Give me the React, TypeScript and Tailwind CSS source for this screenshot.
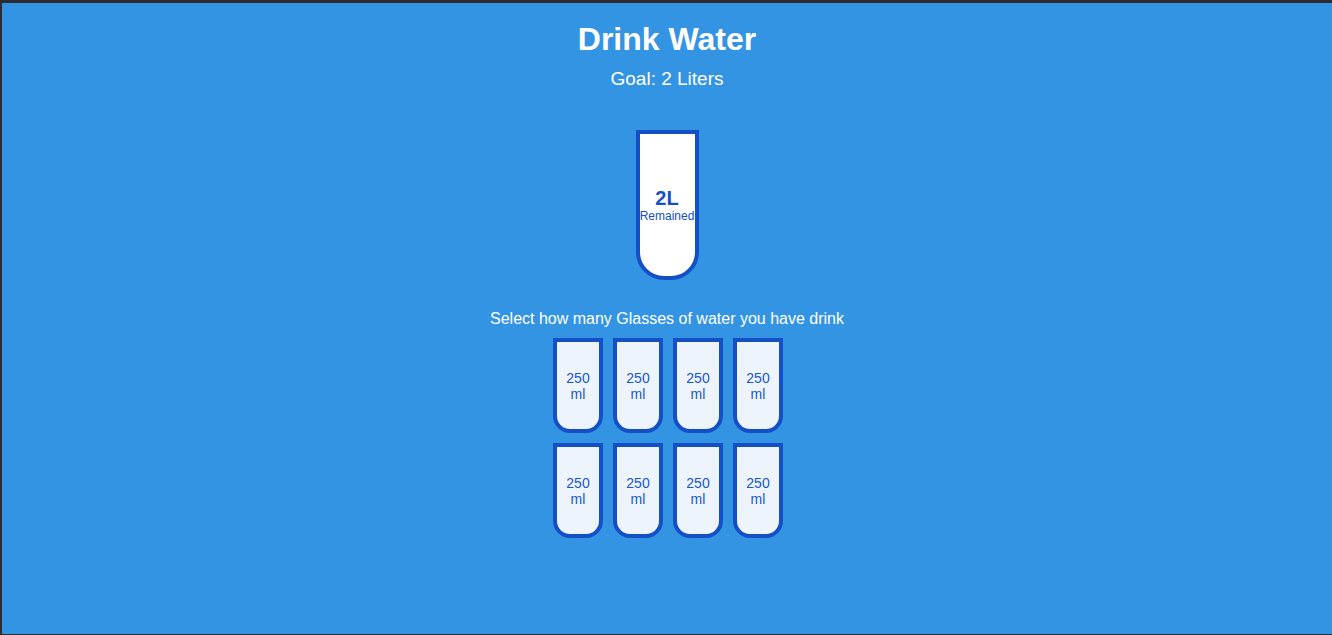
import React from "react";

export default function App() {
  const cups = Array.from({ length: 8 });
  return (
    <div
      className="h-[635px] w-full bg-[#3494e4] border-t-[3px] border-l-2 border-b border-[#2c2c31] flex flex-col items-center text-white overflow-hidden"
      style={{ fontFamily: '"Liberation Sans", Arial, sans-serif' }}
    >
      <h1 className="mt-[18px] text-[32px] font-bold leading-[37px]">Drink Water</h1>
      <h3 className="mt-[9px] text-[19px] leading-[24px]">Goal: 2 Liters</h3>
      <div className="mt-[39px] w-[63px] h-[150px] bg-white border-4 border-[#144fc6] rounded-b-[28px] flex flex-col items-center justify-center text-[#144fc6]">
        <span className="text-[20px] font-bold leading-[22px]">2L</span>
        <small className="text-[12px] leading-[14px] whitespace-nowrap">Remained</small>
      </div>
      <p className="mt-[30px] text-[16px] leading-[18px]">Select how many Glasses of water you have drink</p>
      <div className="mt-[10px] ml-[2px] grid grid-cols-4 gap-[10px]">
        {cups.map((_, i) => (
          <div
            key={i}
            className="w-[50px] h-[95px] bg-[#eef4fc] border-4 border-[#144fc6] rounded-b-[17px] flex flex-col items-center justify-center text-[#1a56cc] text-[14px] leading-[16px]"
          >
            <span>250</span>
            <span>ml</span>
          </div>
        ))}
      </div>
    </div>
  );
}
